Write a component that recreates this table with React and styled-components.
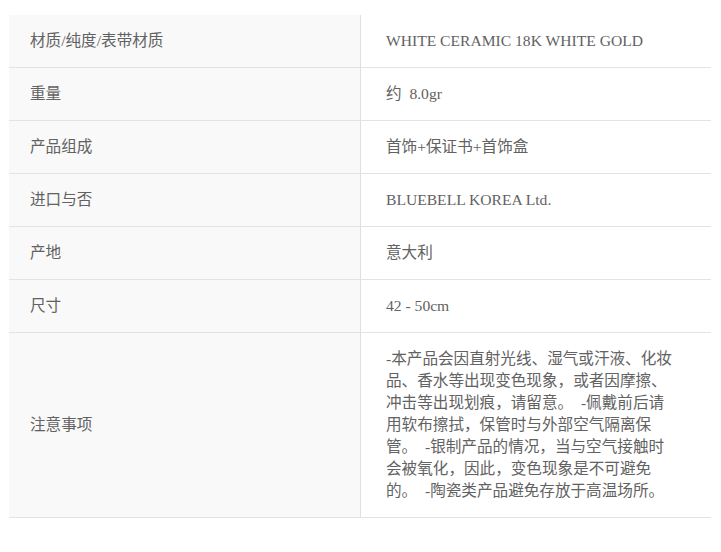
import React from "react";
import styled, { createGlobalStyle } from "styled-components";

const Global = createGlobalStyle`
  html, body { margin: 0; padding: 0; background: #fff; }
  body { font-family: "Liberation Serif", "Noto Sans CJK SC", serif; }
`;

const Page = styled.div`
  padding: 15px 10px 0 9px;
`;

const Table = styled.div`
  width: 702px;
  display: flex;
  flex-direction: column;
`;

const Row = styled.div`
  display: grid;
  grid-template-columns: 352px 1fr;
  border-bottom: 1px solid #e3e3e3;
`;

const Label = styled.div`
  background: #f9f9f9;
  border-right: 1px solid #e0e0e0;
  padding: 15px 10px 15px 21px;
  display: flex;
  align-items: center;
  font-size: 15.6px;
  line-height: 22px;
  color: #626262;
`;

const Value = styled.div`
  padding: 15px 32px 15px 25px;
  display: flex;
  align-items: center;
  font-size: 15.6px;
  line-height: 22px;
  color: #626262;
  line-break: strict;
`;

const rows = [
  ["材质/纯度/表带材质", "WHITE CERAMIC 18K WHITE GOLD"],
  ["重量", "约 \u00a08.0gr"],
  ["产品组成", "首饰+保证书+首饰盒"],
  ["进口与否", "BLUEBELL KOREA Ltd."],
  ["产地", "意大利"],
  ["尺寸", "42 - 50cm"],
  [
    "注意事项",
    "-本产品会因直射光线、湿气或汗液、化妆品、香水等出现变色现象，或者因摩擦、冲击等出现划痕，请留意。\u00a0 -佩戴前后请用软布擦拭，保管时与外部空气隔离保管。\u00a0 -银制产品的情况，当与空气接触时会被氧化，因此，变色现象是不可避免的。\u00a0 -陶瓷类产品避免存放于高温场所。",
  ],
];

export default function App() {
  return (
    <>
      <Global />
      <Page>
        <Table>
          {rows.map(([k, v]) => (
            <Row key={k}>
              <Label>{k}</Label>
              <Value>{v}</Value>
            </Row>
          ))}
        </Table>
      </Page>
    </>
  );
}
